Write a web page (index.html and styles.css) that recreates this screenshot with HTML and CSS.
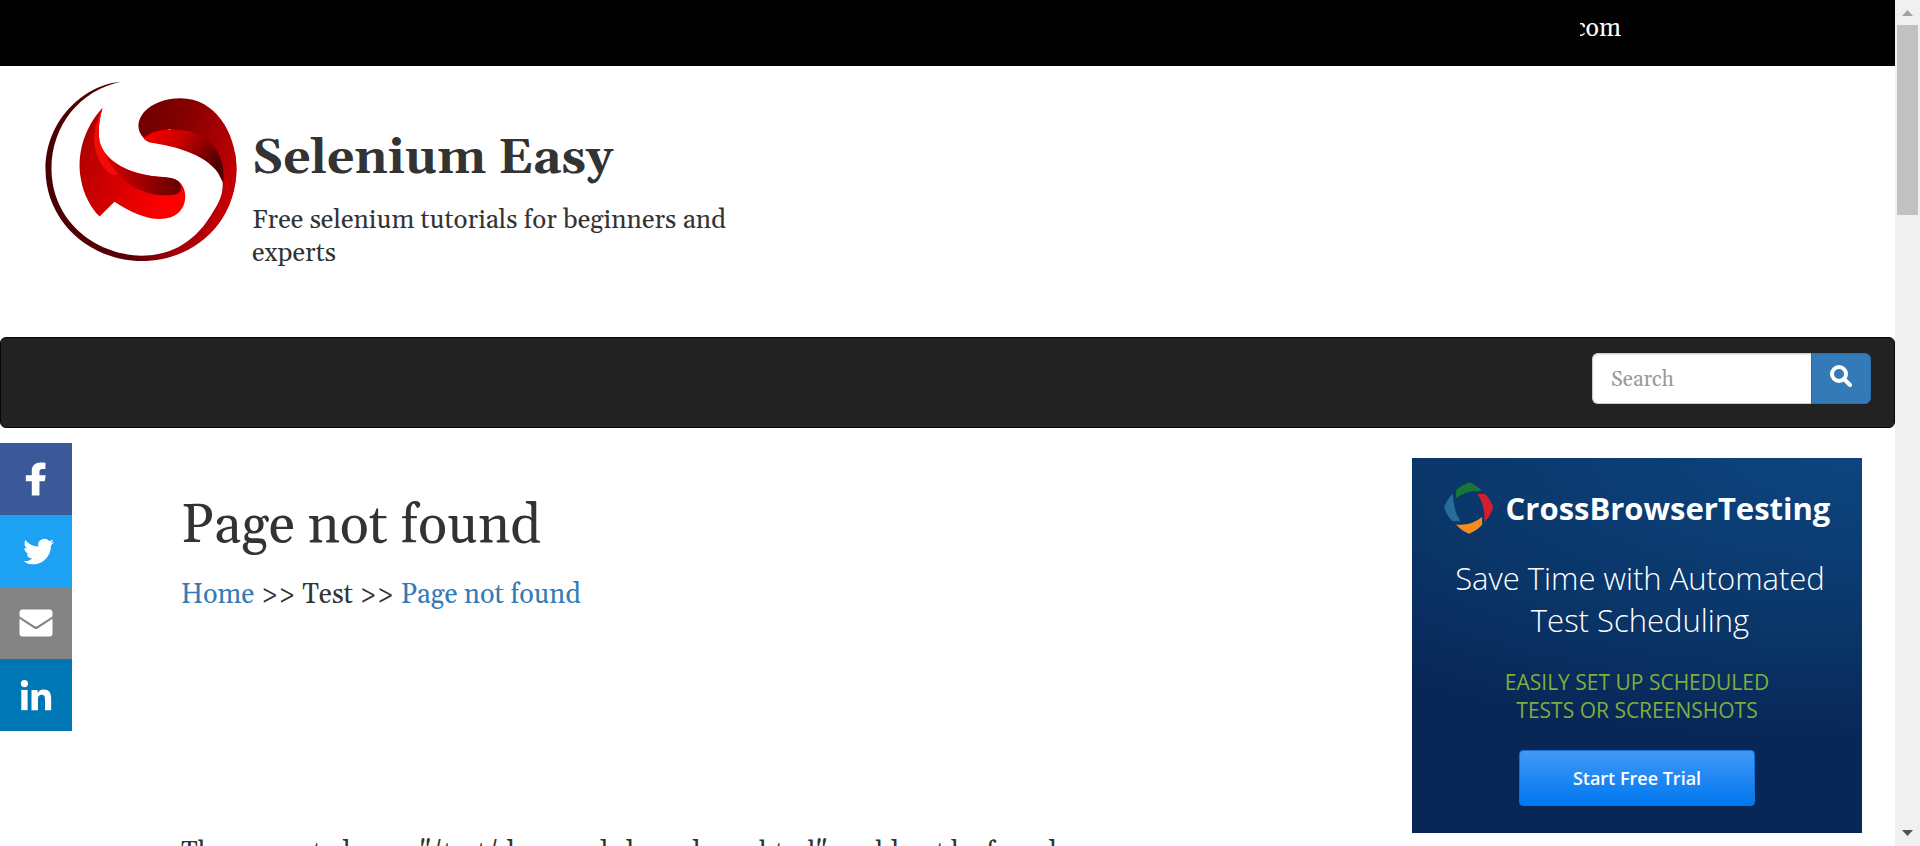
FILE: index.html
```html
<!DOCTYPE html>
<html lang="en">
<head>
<meta charset="utf-8">
<title>Page not found | Selenium Easy</title>
<link rel="stylesheet" href="styles.css">
</head>
<body>
<div class="page">
  <div class="topbar"><div class="ticker"><span>com</span></div></div>
  <header class="header">
    <svg class="logo" viewBox="45 45 576 543" role="img" aria-label="Selenium Easy logo">
      <defs>
        <linearGradient id="ring" x1="0" x2="1" y1="0" y2="0"><stop offset="0" stop-color="#4a0003"/><stop offset=".45" stop-color="#5c0005"/><stop offset=".7" stop-color="#a80008"/><stop offset="1" stop-color="#c00006"/></linearGradient>
        <linearGradient id="dark" x1="0" x2="1" y1="0" y2=".6"><stop offset="0" stop-color="#6d0000"/><stop offset=".4" stop-color="#850000"/><stop offset="1" stop-color="#c70004"/></linearGradient>
        <linearGradient id="fold" x1="0" x2="1" y1="0" y2=".5"><stop offset="0" stop-color="#ff0000"/><stop offset=".45" stop-color="#c90000"/><stop offset="1" stop-color="#500000"/></linearGradient>
        <linearGradient id="tail" x1="0" x2="1" y1="0" y2=".4"><stop offset="0" stop-color="#a30000"/><stop offset=".45" stop-color="#cf0000"/><stop offset="1" stop-color="#ff0000"/></linearGradient>
        <linearGradient id="inner" x1="0" x2="1" y1="0" y2="0"><stop offset="0" stop-color="#d40000"/><stop offset=".5" stop-color="#a00000"/><stop offset="1" stop-color="#650000"/></linearGradient>
      </defs>
      <path fill="url(#ring)" d="M272 47C155 58 45 167 45 311C45 470 181 588 335 588C496 588 621 470 621 310C621 290 619 273 616 258L575 300C589 355 579 399 550 440C502 524 430 572 334 572C187 568 63 461 63 309C63 178 150 73 272 47Z"/>
      <path fill="url(#dark)" d="M342 218C295 168 353 97 453 97C555 97 620 198 621 310C621 372 599 428 564 472C550 490 527 512 500 530C545 482 585 424 579 350L550 290L420 190Z"/>
      <path fill="url(#fold)" d="M341 219C370 190 415 188 461 194C533 200 592 260 581 350C552 277 460 247 374 233C358 231 348 226 341 219Z"/>
      <path fill="url(#tail)" d="M217 126C160 188 138 270 152 342C159 386 182 428 208 454L253 409C308 445 368 472 421 457C465 443 477 393 458 361C443 337 422 337 386 334C276 323 219 278 208 227C203 197 206 164 217 126Z"/>
      <path fill="#f40b07" d="M217 126C187 190 183 239 211 291C222 312 237 325 253 330L292 313C244 290 215 259 208 227C203 197 206 164 217 126Z"/>
      <path fill="url(#inner)" d="M222 262C253 303 310 326 386 334C425 336 451 340 454 365C455 385 438 390 402 390C337 388 267 353 222 262Z"/>
    </svg>
    <div class="brand">
      <h1 class="brand-name">Selenium Easy</h1>
      <p class="slogan">Free selenium tutorials for beginners and experts</p>
    </div>
  </header>
  <nav class="navbar" aria-label="Main">
    <form class="search">
      <input class="search-input" type="text" placeholder="Search" aria-label="Search">
      <button class="search-button" type="button" aria-label="Submit search">
        <svg viewBox="0 0 22 22" width="22" height="22"><circle cx="9" cy="9" r="7" fill="none" stroke="#fff" stroke-width="4"/><path d="M14 14L20 20" stroke="#fff" stroke-width="4" stroke-linecap="round"/></svg>
      </button>
    </form>
  </nav>
  <div class="content">
    <div class="share">
      <a class="share-link facebook" href="#" aria-label="Facebook"><svg viewBox="0 0 32 32"><path fill="#fff" d="M17.300 27V17.500H20.800L21.500 13.500H17.300V11.200C17.300 9.800 18 9.300 19.300 9.300H21.300V5.200C20.500 5 19.300 5 18.300 5C14.500 5 12.200 7 12.200 10.400V13.500H8.200V17.500H12.200V27Z" transform="translate(1 0)"/></svg></a>
      <a class="share-link twitter" href="#" aria-label="Twitter"><svg viewBox="0 0 32 32"><path fill="#fff" transform="translate(4 2.500) scale(.86)" d="M28 8.600a9.900 9.900 0 0 1-2.800.8 5 5 0 0 0 2.100-2.700c-1 .6-2 1-3.100 1.200a4.900 4.900 0 0 0-8.400 4.500A14 14 0 0 1 5.700 7.200a4.900 4.900 0 0 0 1.500 6.600c-.8 0-1.600-.3-2.200-.6v.1c0 2.400 1.700 4.400 3.900 4.800a5 5 0 0 1-2.200.1 4.900 4.900 0 0 0 4.600 3.400A9.900 9.900 0 0 1 4 23.600 13.900 13.900 0 0 0 11.500 26c9.100 0 14.300-7.700 14-14.600.9-.7 1.800-1.600 2.500-2.800z"/></svg></a>
      <a class="share-link email" href="#" aria-label="Email"><svg viewBox="0 0 32 32"><g fill="#fff"><path d="M27 22.800a2.200 2.200 0 0 1-2.200 2.200H7.200A2.200 2.200 0 0 1 5 22.800V13.200L14.800 19.600Q16 20.400 17.200 19.600L27 13.200Z"/><path d="M27 9.200V10.800Q27 11.500 26.400 12L17 18Q16 18.600 15 18L5.600 12Q5 11.500 5 10.800V9.200A2.200 2.200 0 0 1 7.200 7H24.800A2.200 2.200 0 0 1 27 9.200Z"/></g></svg></a>
      <a class="share-link linkedin" href="#" aria-label="LinkedIn"><svg viewBox="0 0 32 32"><g fill="#fff"><path d="M6.200 12.600h4.200v13.500H6.200z"/><circle cx="8.300" cy="8.400" r="2.400"/><path d="M13 12.600h4v1.900h.1c.6-1 1.900-2.200 4-2.200 4.200 0 5 2.800 5 6.400v7.400H22v-6.600c0-1.600 0-3.600-2.200-3.600s-2.500 1.700-2.500 3.500v6.700H13z"/></g></svg></a>
    </div>
    <main class="main">
      <h2 class="title">Page not found</h2>
      <div class="crumbs"><a href="#">Home</a> &gt;&gt; Test &gt;&gt; <a href="#">Page not found</a></div>
      <p class="message">The requested page "/test/drag-and-drop-demo.html" could not be found.</p>
    </main>
    <aside class="ad">
      <div class="ad-brand">
        <svg class="ad-logo" viewBox="40 35 152 159"><path fill="#17773a" d="M76 85V61Q94 44 116 36Q139 44 156 62Q110 58 76 85Z"/><path fill="#d11f2b" d="M142 72H165Q182 88 190 113Q182 139 163 157Q166 108 142 72Z"/><path fill="#f68b24" d="M156 142V166Q139 185 116 193Q92 184 76 165Q122 170 156 142Z"/><path fill="#286c98" d="M67 71Q68 126 90 155H66Q48 139 40 113Q48 88 67 71Z"/></svg>
        <span>CrossBrowserTesting</span>
      </div>
      <p class="ad-lead">Save Time with Automated<br>Test Scheduling</p>
      <p class="ad-note">EASILY SET UP SCHEDULED<br>TESTS OR SCREENSHOTS</p>
      <button class="ad-button" type="button">Start Free Trial</button>
    </aside>
  </div>
</div>
<div class="scrollbar" aria-hidden="true">
  <svg viewBox="0 0 11 6" width="11" height="6"><path fill="#a3a3a3" d="M0 6L5.500 0L11 6Z"/></svg>
  <div class="thumb"></div>
  <svg viewBox="0 0 11 6" width="11" height="6"><path fill="#505050" d="M0 0L5.500 6L11 0Z"/></svg>
</div>
</body>
</html>
```
FILE: styles.css
```css
* { box-sizing: border-box; }
body {
  margin: 0;
  height: 100vh;
  display: flex;
  overflow: hidden;
  background: #fff;
  color: #333;
  font-family: Georgia, Gelasio, "Liberation Serif", serif;
  font-size: 27px;
}
h1, h2, p { margin: 0; }
a { color: #337ab7; text-decoration: none; }
.page { flex: 1; min-width: 0; }
.topbar {
  height: 66px;
  padding: 12px 274px 0 0;
  background: #000;
  color: #fff;
  display: flex;
  justify-content: flex-end;
  align-items: flex-start;
}
.ticker {
  width: 41px;
  display: flex;
  justify-content: flex-end;
  overflow: hidden;
  font-size: 25px;
  line-height: 34px;
}
.header {
  display: flex;
  gap: 15px;
  height: 271px;
  padding: 15px 45px 0;
}
.logo { width: 192px; height: 180px; flex: none; }
.brand { width: 500px; padding-top: 48px; }
.brand-name { font-size: 48px; line-height: 60px; font-weight: 700; }
.slogan { margin-top: 15px; font-size: 26px; line-height: 33px; }
.navbar {
  display: flex;
  justify-content: flex-end;
  height: 91px;
  padding: 15px 23px;
  background: #222;
  border: 1px solid #080808;
  border-radius: 6px;
}
.search { display: flex; height: 51px; }
.search-input {
  width: 219px;
  padding: 2px 18px 0;
  border: 1px solid #ccc;
  border-right: 0;
  border-radius: 6px 0 0 6px;
  font-family: inherit;
  font-size: 21px;
  box-shadow: inset 0 1px 2px rgba(0, 0, 0, .1);
}
.search-input::placeholder { color: #999; }
.search-button {
  width: 60px;
  padding: 0 0 5px;
  border: 1px solid #2e6da4;
  border-radius: 0 6px 6px 0;
  background: #337ab7;
}
.search-button svg { vertical-align: middle; }
.content { display: flex; align-items: flex-start; padding: 15px 33px 0 0; }
.share { width: 72px; flex: none; }
.share-link { display: flex; align-items: center; justify-content: center; height: 72px; }
.share-link svg { width: 48px; height: 48px; }
.facebook { background: #3b5998; }
.twitter { background: #1da1f2; }
.email { background: #848484; }
.linkedin { background: #0077b5; }
.main { flex: 1; padding: 53px 0 0 109px; }
.title { font-size: 54px; line-height: 60px; font-weight: 400; }
.crumbs { margin-top: 20px; line-height: 39px; }
.message { margin-top: 219px; line-height: 39px; white-space: nowrap; }
.ad {
  width: 450px;
  height: 375px;
  flex: none;
  margin-top: 15px;
  padding-top: 24px;
  background: radial-gradient(ellipse 900px 340px at 100% 0, #0d4580 0, #0a3669 50%, #082656 85%);
  color: #fff;
  font-family: "Open Sans", sans-serif;
  text-align: center;
}
.ad-brand {
  display: flex;
  align-items: center;
  justify-content: center;
  gap: 12px;
  font-size: 31px;
  line-height: 52px;
  font-weight: 700;
}
.ad-logo { width: 50px; height: 52px; }
.ad-lead { margin-top: 23px; padding-left: 6px; font-size: 31px; line-height: 42px; font-weight: 300; }
.ad-note { margin-top: 27px; color: #7fae3c; font-size: 21px; line-height: 28px; }
.ad-button {
  width: 236px;
  height: 56px;
  margin-top: 26px;
  border: 1px solid #1670d4;
  border-radius: 4px;
  background: linear-gradient(#4199f7, #0077ee);
  color: #fff;
  font-family: inherit;
  font-size: 18px;
  font-weight: 600;
}
.scrollbar {
  display: flex;
  flex-direction: column;
  align-items: center;
  width: 25px;
  padding: 10px 0;
  background: #f0f0f0;
}
.thumb { width: 21px; height: 190px; margin: 9px 0 auto; background: #c1c1c1; }
```
